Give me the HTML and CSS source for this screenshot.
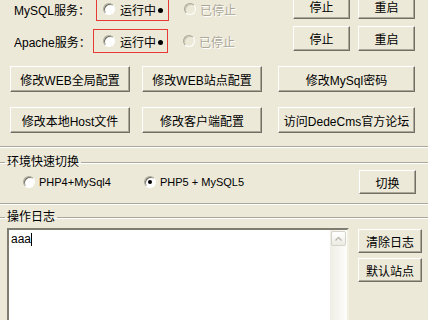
FILE: index.html
```html
<!DOCTYPE html>
<html lang="zh-CN">
<head>
    <meta charset="UTF-8">
    <meta name="viewport" content="width=device-width, initial-scale=1.0">
    <title>DedeAMPZ</title>
    <link rel="stylesheet" href="styles.css">
</head>
<body>
<div class="services">
    <div class="svc">
        <span class="svc-label">MySQL服务：</span>
        <div class="status">
            <span class="radio"></span>
            <span>运行中</span>
            <span class="dot"></span>
        </div>
        <div class="stopped">
            <span class="radio radio-off"></span>
            <span class="muted">已停止</span>
        </div>
        <div class="svc-btns">
            <button class="btn btn-sm">停止</button>
            <button class="btn btn-sm">重启</button>
        </div>
    </div>
    <div class="svc svc-apache">
        <span class="svc-label">Apache服务：</span>
        <div class="status">
            <span class="radio"></span>
            <span>运行中</span>
            <span class="dot"></span>
        </div>
        <div class="stopped">
            <span class="radio radio-off"></span>
            <span class="muted">已停止</span>
        </div>
        <div class="svc-btns">
            <button class="btn btn-sm">停止</button>
            <button class="btn btn-sm">重启</button>
        </div>
    </div>
</div>

<div class="tools">
    <button class="btn">修改WEB全局配置</button>
    <button class="btn">修改WEB站点配置</button>
    <button class="btn btn-wide">修改MySql密码</button>
    <button class="btn">修改本地Host文件</button>
    <button class="btn">修改客户端配置</button>
    <button class="btn btn-wide">访问DedeCms官方论坛</button>
</div>

<div class="sep"></div>

<fieldset class="group group-env">
    <legend>环境快速切换</legend>
    <div class="env-row">
        <label class="option"><span class="radio"></span>PHP4+MySql4</label>
        <label class="option"><span class="radio radio-on"></span>PHP5 + MySQL5</label>
        <button class="btn btn-switch">切换</button>
    </div>
</fieldset>

<fieldset class="group group-log">
    <legend>操作日志</legend>
    <div class="log-row">
        <div class="log">
            <div class="log-text">aaa<span class="caret"></span></div>
            <div class="scrollbar">
                <div class="scroll-up">
                    <svg width="7" height="4" viewBox="0 0 7 4"><path d="M0.5 3.5 L3.5 0.5 L6.5 3.5" fill="none" stroke="#b6b4a8" stroke-width="1.2"/></svg>
                </div>
            </div>
        </div>
        <div class="log-btns">
            <button class="btn btn-log">清除日志</button>
            <button class="btn btn-log">默认站点</button>
        </div>
    </div>
</fieldset>
</body>
</html>
```

FILE: styles.css
```css
body {
    margin: 0;
    width: 428px;
    height: 321px;
    overflow: hidden;
    background-color: #ece9d8;
    color: #000;
    font: 12px "Liberation Sans", "Noto Sans CJK SC", sans-serif;
}

/* buttons, classic 3D look */
.btn {
    font: inherit;
    color: #000;
    background-color: #ece9d8;
    border: 1px solid;
    border-color: #fff #716f64 #716f64 #fff;
    box-shadow: inset -1px -1px 0 #aca899;
    padding: 0;
    height: 25px;
    cursor: pointer;
}

/* radio circles */
.radio {
    display: inline-block;
    box-sizing: border-box;
    width: 12px;
    height: 12px;
    border-radius: 50%;
    background-color: #fff;
    border: 1px solid;
    border-color: #aca899 #fff #fff #aca899;
    box-shadow: inset 1px 1px 0 #716f64;
    position: relative;
    flex-shrink: 0;
}

.radio-off {
    background-color: #ece9d8;
    box-shadow: inset 1px 1px 0 #c8c5b5;
}

.radio-on::after {
    content: "";
    position: absolute;
    left: 3px;
    top: 3px;
    width: 4px;
    height: 4px;
    border-radius: 50%;
    background-color: #000;
}

/* service rows */
.services {
    margin-top: -3px;
    display: flex;
    flex-direction: column;
    gap: 8px;
}

.svc {
    display: flex;
    align-items: center;
    height: 24px;
}

.svc-label {
    box-sizing: border-box;
    width: 96px;
    padding-left: 14px;
}

.status {
    box-sizing: border-box;
    display: flex;
    align-items: center;
    width: 73px;
    height: 24px;
    padding-left: 6px;
    border: 1px solid #e53b34;
}

.svc-apache .svc-label {
    width: 93px;
}

.svc-apache .status {
    width: 75px;
    padding-left: 9px;
}

.status .radio {
    margin-right: 5px;
}

.dot {
    width: 5px;
    height: 5px;
    border-radius: 50%;
    background-color: #000;
    margin-left: 2px;
    margin-top: 2px;
}

.stopped {
    display: flex;
    align-items: center;
    margin-left: 15px;
}

.stopped .radio {
    margin-right: 4px;
}

.muted {
    color: #aca899;
    text-shadow: 1px 1px 0 #fff;
}

.svc-btns {
    display: flex;
    gap: 8px;
    margin-left: auto;
    margin-right: 13px;
    align-self: flex-start;
    margin-top: -3px;
}

.btn-sm {
    width: 57px;
}

/* tool buttons */
.tools {
    display: grid;
    grid-template-columns: 120px 120px 141px;
    column-gap: 12px;
    row-gap: 15px;
    margin-top: 13px;
    padding-left: 10px;
}

.tools .btn {
    height: 26px;
}

.tools .btn-wide {
    justify-self: end;
    width: 137px;
}

.sep {
    margin-top: 13px;
    border-top: 1px solid #aca899;
    border-bottom: 1px solid #fff;
}

/* group boxes */
.group {
    margin: 7px -3px 0;
    padding: 0;
    border: 1px solid #aca899;
    box-shadow: inset 0 1px 0 #fff, 0 1px 0 #fff;
    min-width: 0;
}

.group legend {
    line-height: 14px;
    padding: 0 2px;
    margin-left: 7px;
}

.group-env {
    padding: 1px 14px 9px 0;
}

.env-row {
    display: flex;
    align-items: center;
    height: 24px;
}

.option {
    display: flex;
    align-items: center;
    gap: 4px;
    font-size: 11px;
}

.option:first-child {
    margin-left: 25px;
    width: 121px;
}

.btn-switch {
    margin-left: auto;
    width: 57px;
    height: 24px;
}

.group-log {
    margin-top: 6px;
    padding: 4px 0 0 0;
    border-bottom: none;
}

.log-row {
    display: flex;
    align-items: flex-start;
}

.log {
    box-sizing: border-box;
    display: flex;
    margin-left: 9px;
    width: 342px;
    height: 92px;
    background-color: #fff;
    border: 2px solid;
    border-color: #7f7d72 #f1efe2 #f1efe2 #7f7d72;
    border-bottom: none;
}

.log-text {
    flex: 1;
    padding: 3px 2px;
    line-height: 13px;
}

.caret {
    display: inline-block;
    width: 1px;
    height: 13px;
    background-color: #000;
    vertical-align: top;
}

.scrollbar {
    width: 17px;
    background: linear-gradient(to right, #eeede5, #fdfdfb);
    padding: 1px 1px 0;
    box-sizing: border-box;
}

.scroll-up {
    box-sizing: border-box;
    height: 15px;
    border: 1px solid #d6d4c8;
    border-radius: 2px;
    background: linear-gradient(#fff, #ecebe3);
    display: flex;
    align-items: center;
    justify-content: center;
}

.log-btns {
    display: flex;
    flex-direction: column;
    gap: 5px;
    margin-left: 9px;
    margin-top: 1px;
}

.btn-log {
    width: 64px;
    height: 24px;
}
```
